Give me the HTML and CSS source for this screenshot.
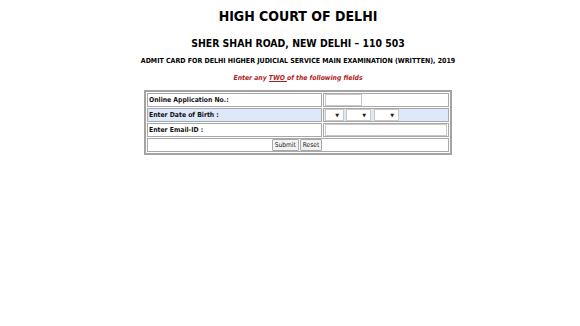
FILE: index.html
```html
<!DOCTYPE html>
<html>
<head>
<meta charset="utf-8">
<link rel="stylesheet" href="styles.css">
</head>
<body>
<div class="page">
  <h1 class="title">HIGH COURT OF DELHI</h1>
  <h2 class="subtitle">SHER SHAH ROAD, NEW DELHI – 110 503</h2>
  <p class="exam">ADMIT CARD FOR DELHI HIGHER JUDICIAL SERVICE MAIN EXAMINATION (WRITTEN), 2019</p>
  <p class="note">Enter any <u>TWO </u>of the following fields</p>
  <table class="form">
    <colgroup><col class="c1"><col class="c2"></colgroup>
    <tr>
      <td class="label">Online Application No.:</td>
      <td class="field"><input class="app" type="text"></td>
    </tr>
    <tr class="alt">
      <td class="label">Enter Date of Birth :</td>
      <td class="field">
        <div class="dob">
          <span class="sel s1"><span class="arrow">▼</span></span>
          <span class="sel s2"><span class="arrow">▼</span></span>
          <span class="sel s3"><span class="arrow">▼</span></span>
        </div>
      </td>
    </tr>
    <tr>
      <td class="label">Enter Email-ID :</td>
      <td class="field"><input class="email" type="text"></td>
    </tr>
    <tr>
      <td class="actions" colspan="2"><div class="btns"><button class="btn" type="button">Submit</button><button class="btn" type="button">Reset</button></div></td>
    </tr>
  </table>
</div>
</body>
</html>
```
FILE: styles.css
```css
html, body {
  margin: 0;
  padding: 0;
  background: #ffffff;
}
.page {
  display: flex;
  flex-direction: column;
  align-items: center;
  padding-left: 16px;
  font-family: "DejaVu Sans Condensed", "DejaVu Sans", sans-serif;
  color: #000;
}
.title {
  margin: 7px 0 0 0;
  font-size: 14px;
  line-height: 18px;
  font-weight: bold;
}
.subtitle {
  margin: 10px 0 0 0;
  font-size: 10.4px;
  line-height: 16px;
  font-weight: bold;
}
.exam {
  margin: 5px 0 0 0;
  font-size: 7px;
  line-height: 11px;
  font-weight: bold;
}
.note {
  margin: 6px 0 0 0;
  font-size: 6.8px;
  line-height: 11px;
  font-weight: bold;
  font-style: italic;
  color: #b01c24;
}
.form {
  margin-top: 6px;
  width: 308px;
  table-layout: fixed;
  border: 2px solid #a3a3a3;
  border-spacing: 1px;
  font-size: 6.8px;
  font-weight: bold;
}
.c1 { width: 175px; }
.c2 { width: 126px; }
.form td {
  border: 1px solid #a8a8a8;
  padding: 0 1px;
  box-sizing: border-box;
  height: 14px;
  overflow: hidden;
}
.label {
  color: #111;
  white-space: nowrap;
}
.alt td {
  background: #dde8fb;
}
.app, .email {
  display: block;
  box-sizing: border-box;
  height: 12px;
  border: 1px solid #c8c8c8;
  background: #fff;
  padding: 0;
  margin: 0;
}
.app { width: 37px; }
.email { width: 100%; }
.dob {
  display: flex;
  align-items: center;
  gap: 2px;
}
.sel {
  display: flex;
  justify-content: flex-end;
  align-items: center;
  box-sizing: border-box;
  height: 12px;
  background: #fff;
  border: 1px solid #c8c8c8;
}
.s1 { width: 19px; }
.s2 { width: 25px; }
.s3 { width: 25px; margin-left: 1px; }
.arrow {
  font-family: "DejaVu Sans", sans-serif;
  font-size: 5px;
  line-height: 5px;
  color: #222;
  margin-right: 4px;
}
.actions {
  padding: 0;
}
.btns {
  display: flex;
  justify-content: center;
  gap: 1px;
  padding-right: 2px;
}
.btn {
  font-family: "DejaVu Sans Condensed", "DejaVu Sans", sans-serif;
  font-size: 6.6px;
  font-weight: normal;
  color: #222;
  height: 12px;
  line-height: 10px;
  padding: 0 2px;
  margin: 0;
  background: #f2f2f2;
  border: 1px solid #a9a9a9;
  border-radius: 1px;
}
```
